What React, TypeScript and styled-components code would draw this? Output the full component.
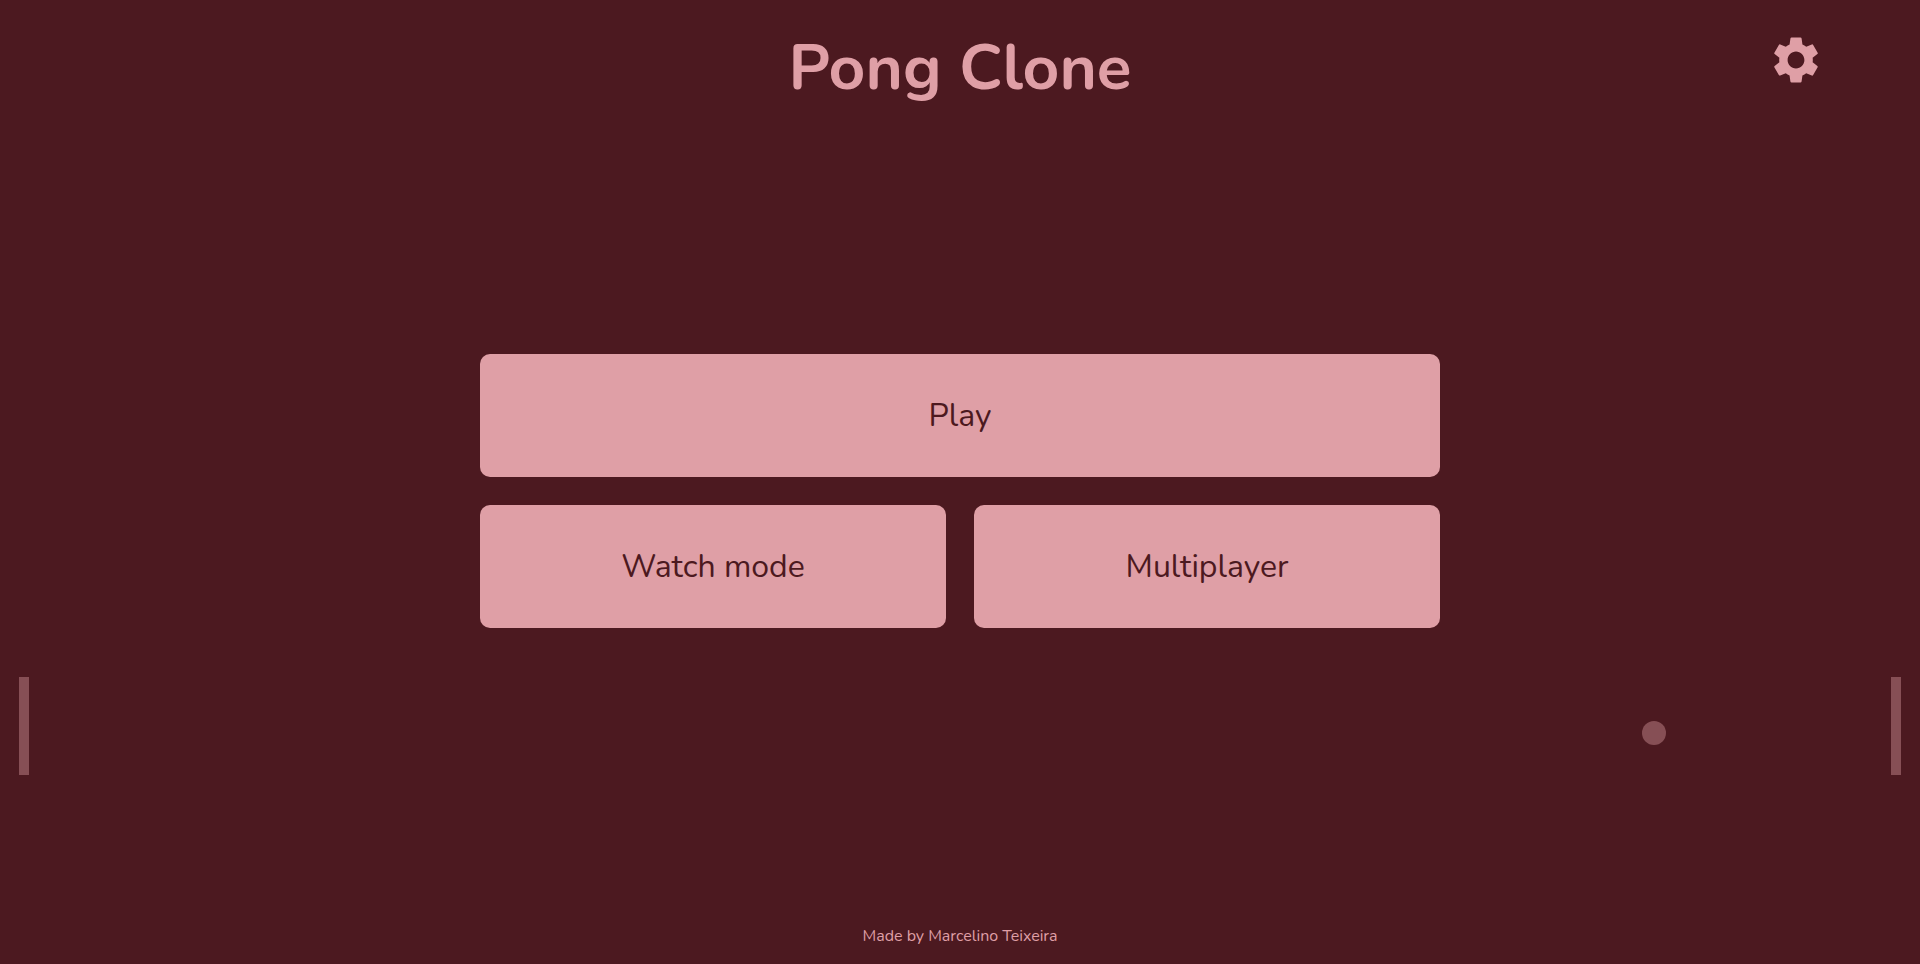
import React from "react";
import styled, { createGlobalStyle, ThemeProvider } from "styled-components";
import { MdSettings } from "react-icons/md";

const theme = {
  dark: "#4c1920",
  light: "#df9fa6",
};

const GlobalStyle = createGlobalStyle`
  *, *::before, *::after {
    box-sizing: border-box;
  }

  body {
    margin: 0;
    background: ${theme.dark};
    color: ${theme.light};
    font-family: Nunito, Lato, sans-serif;
  }
`;

const Page = styled.div`
  position: relative;
  display: flex;
  flex-direction: column;
  min-height: 100vh;
  overflow: hidden;
`;

const Court = styled.div`
  position: absolute;
  inset: 0;
  opacity: 0.4;
  pointer-events: none;
`;

const Paddle = styled.div<{ $side: "left" | "right" }>`
  position: absolute;
  top: 70.2%;
  ${({ $side }) => $side}: 1%;
  width: 10px;
  height: 98px;
  background: ${({ theme }) => theme.light};
`;

const Ball = styled.div`
  position: absolute;
  top: 74.8%;
  left: 85.5%;
  width: 24px;
  height: 24px;
  border-radius: 50%;
  background: ${({ theme }) => theme.light};
`;

const Header = styled.header`
  display: grid;
  grid-template-columns: 1fr auto 1fr;
  padding: 24px 5% 0;
`;

const Title = styled.h1`
  grid-column: 2;
  margin: 0;
  font-size: 64px;
  line-height: 88px;
  font-weight: 700;
`;

const SettingsButton = styled.button`
  display: flex;
  justify-self: end;
  align-self: start;
  margin-top: 8px;
  padding: 0;
  border: 0;
  background: none;
  color: ${({ theme }) => theme.light};
  font-size: 56px;
  cursor: pointer;
`;

const Main = styled.main`
  flex: 1;
  display: flex;
  align-items: center;
  justify-content: center;
  padding-bottom: 38px;
`;

const Menu = styled.nav`
  position: relative;
  display: grid;
  grid-template-columns: 1fr 1fr;
  gap: 28px;
  width: 50%;
`;

const MenuButton = styled.button<{ $wide?: boolean }>`
  grid-column: ${({ $wide }) => ($wide ? "1 / -1" : "auto")};
  padding: 40px 0;
  border: 0;
  border-radius: 10px;
  background: ${({ theme }) => theme.light};
  color: ${({ theme }) => theme.dark};
  font-family: inherit;
  font-size: 32px;
  line-height: 43px;
  font-weight: 400;
  cursor: pointer;
`;

const Footer = styled.footer`
  padding: 16px;
  font-size: 16px;
  line-height: 24px;
  text-align: center;
`;

export default function App() {
  return (
    <ThemeProvider theme={theme}>
      <GlobalStyle />
      <Page>
        <Court aria-hidden="true">
          <Paddle $side="left" />
          <Ball />
          <Paddle $side="right" />
        </Court>
        <Header>
          <Title>Pong Clone</Title>
          <SettingsButton type="button" aria-label="Settings">
            <MdSettings />
          </SettingsButton>
        </Header>
        <Main>
          <Menu>
            <MenuButton type="button" $wide>
              Play
            </MenuButton>
            <MenuButton type="button">Watch mode</MenuButton>
            <MenuButton type="button">Multiplayer</MenuButton>
          </Menu>
        </Main>
        <Footer>Made by Marcelino Teixeira</Footer>
      </Page>
    </ThemeProvider>
  );
}
